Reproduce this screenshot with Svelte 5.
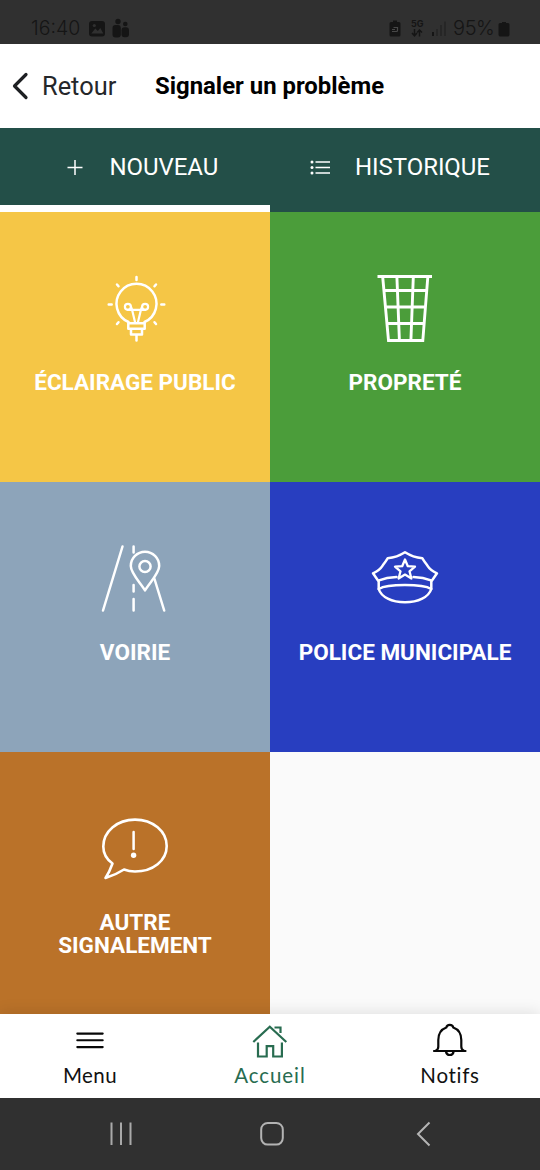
<script>
  const tiles = [
    { id: 'light', label: 'ÉCLAIRAGE PUBLIC', color: '#f5c646', box: '99 272 72 72' },
    { id: 'bin', label: 'PROPRETÉ', color: '#4b9d3a', box: '369 272 72 72' },
    { id: 'road', label: 'VOIRIE', color: '#8da4ba', box: '99 542 72 72' },
    { id: 'police', label: 'POLICE MUNICIPALE', color: '#283ec0', box: '369 542 72 72' },
    { id: 'other', label: 'AUTRE SIGNALEMENT', color: '#ba7229', box: '99 812 72 72' }
  ];
</script>

<div class="screen">
  <div class="status">
    <span class="time">16:40</span>
    <svg class="left-icons" width="36" height="22" viewBox="88 17 36 22">
      <rect x="89" y="21" width="16" height="15.500" rx="3" fill="#151515" />
      <path d="M91.300 33.500l4-5 2.500 2.500 2.500-3 3 5.500z" fill="#303030" />
      <circle cx="94.300" cy="25.500" r="1.600" fill="#303030" />
      <g fill="#151515">
        <circle cx="118" cy="21.500" r="2.700" /><circle cx="125.300" cy="24" r="2.300" />
        <rect x="112.500" y="25" width="8.300" height="12.500" rx="3" />
        <rect x="121.500" y="27.300" width="7.500" height="10" rx="3" />
      </g>
    </svg>
    <span class="space"></span>
    <svg class="battery-save" width="14" height="20" viewBox="389 19 14 20">
      <path d="M392 22h2v-1.500h4V22h2q1.500 0 1.500 1.500V35q0 1.500-1.500 1.500h-8q-1.500 0-1.500-1.500V23.500Q390.500 22 392 22z" fill="#151515" />
      <path d="M393 31.500h4.500q1 0 1-1v-3h-4m-1.500 2h3" fill="none" stroke="#484848" stroke-width="1.200" />
    </svg>
    <span class="network">
      <span>5G</span>
      <svg width="12" height="8" viewBox="0 0 12 8"><path d="M3.500 0v6M1 4l2.500 2.800L6 4M8.500 7.500V1M6.200 3.500L8.500 1 11 3.500" fill="none" stroke="#151515" stroke-width="1.500" /></svg>
    </span>
    <svg class="signal" width="15" height="17" viewBox="432 20 15 17">
      <path d="M434 32v4" stroke="#151515" stroke-width="2" />
      <path d="M438 29v7M442 25v11M446 21.500v14.500" stroke="#222" stroke-width="1.300" />
    </svg>
    <span class="percent">95%</span>
    <svg class="battery" width="12" height="17" viewBox="0 0 12 17"><path d="M2 2h2V1h4v1h2q1.500 0 1.500 1.500v10Q11.500 15.500 10 15.500H2Q.5 15.500.5 13.500v-10Q.5 2 2 2z" fill="#151515" /></svg>
  </div>

  <header>
    <svg width="18" height="30" viewBox="11 71 18 30"><path d="M26 74.500L14.500 86 26 97.500" fill="none" stroke="#1e2023" stroke-width="3.200" stroke-linecap="round" stroke-linejoin="round" /></svg>
    <span class="back">Retour</span>
    <h1>Signaler un problème</h1>
  </header>

  <nav class="tabs">
    <div class="tab active">
      <svg width="16" height="16" viewBox="67 160 16 16"><path d="M67.500 167.500h15M75 160v15" stroke="#fff" stroke-width="1.500" /></svg>
      <span>NOUVEAU</span>
    </div>
    <div class="tab history">
      <svg width="21" height="16" viewBox="310 160 21 16">
        <path d="M315.500 162h14.500M315.500 167.500h14.500M315.500 173h14.500" stroke="#fff" stroke-width="1.500" />
        <g fill="#fff"><circle cx="312" cy="162" r="1.500" /><circle cx="312" cy="167.500" r="1.500" /><circle cx="312" cy="173" r="1.500" /></g>
      </svg>
      <span>HISTORIQUE</span>
    </div>
  </nav>

  <main>
    {#each tiles as tile}
      <div class="tile" style:background={tile.color}>
        <svg width="72" height="72" viewBox={tile.box} fill="none" stroke="#fff" stroke-width="2.500" stroke-linecap="round" stroke-linejoin="round">
          {#if tile.id === 'light'}
            <path d="M128.500 322A20 20 0 1 1 144.500 322M136.500 277v3M108.700 304.500h3M161.300 304.500h3M117 284.500l1.500 1.800M156 284.500l-1.500 1.800M117 324l1.500-1.800M156 324l-1.500-1.800" />
            <path d="M128.300 323.300h16.400v5.500h-16.400zM131 328.800h11v5.700h-11zM136.500 335.500v5" />
            <g stroke-width="2.200"><path d="M135 322l-3-12.500M138 322l3-12.500M127.700 309.800h17.600M131 307l1 2.500M142 307l-1 2.500" /><circle cx="127.900" cy="306.800" r="3" /><circle cx="145.100" cy="306.800" r="3" /></g>
          {:else if tile.id === 'bin'}
            <path stroke-width="2.900" stroke-linecap="butt" stroke-linejoin="miter" d="M377.500 276.500h54.500M382.700 277l5.800 63.500h34.300l5-63.500M396.900 277l2.500 63.500M413.300 277l-2.400 63.500M384 290.500h42.500M385.300 307h40M387 323.500h37.500" />
          {:else if tile.id === 'road'}
            <path d="M122.500 546.500L103 610.500M133.600 546.500v6M133.600 585v6.500M133.600 599v11.500M154.500 579l9.700 31.500" />
            <path d="M145 590.500C141 583.500 130.800 573.500 130.800 566a14.200 14.200 0 0 1 28.400 0c0 7.500-10.200 17.500-14.200 24.500z" />
            <circle cx="145" cy="566.500" r="5.600" />
          {:else if tile.id === 'police'}
            <path d="M378.700 581.500L373 573.300q6.500-2.800 9.800-8 3-4 4.800-7 9.500-1 17.400-6 7.900 5 17.400 6 1.800 3 4.800 7 3.300 5.200 9.800 8l-5.700 8.200v7.500c-2.500 8-13 13.300-26.300 13.300s-23.800-5.300-26.300-13.300z" />
            <path d="M378.700 589c9-5.200 43.500-5.200 52.600 0M379 580.300q7.500-2.800 17.500-3.300M431 580.300q-7.500-2.800-17.500-3.300" />
            <path stroke-width="2.300" d="M405 559.500l2.800 6.700 7.200.5-5.500 4.600 1.900 7.200-6.400-3.900-6.400 3.900 1.900-7.200-5.500-4.600 7.200-.5z" />
          {:else}
            <path stroke-width="2.600" d="M112.500 863.500C105.500 858.500 103.300 852.500 103.300 846.500 103.300 831.500 117 819.600 135 819.600s31.700 11.900 31.700 26.400-13.700 25.500-31.700 25.500q-6 0-11-2-8.500 5.500-18.500 8.500 4-6 7-14.500z" />
            <path d="M133.600 832v17" /><circle cx="133.600" cy="855.300" r="2.700" fill="#fff" stroke="none" />
          {/if}
        </svg>
        <div class="label">{tile.label}</div>
      </div>
    {/each}
  </main>

  <nav class="bottom">
    <div class="item menu">
      <svg width="36" height="38" viewBox="72 1021 36 38"><path d="M77.300 1033.600h25.400M77.300 1040.300h25.400M77.300 1047.100h25.400" stroke="#080808" stroke-width="2.100" stroke-linecap="round" /></svg>
      <span>Menu</span>
    </div>
    <div class="item home">
      <svg width="36" height="38" viewBox="252 1021 36 38"><path d="M253.300 1042l16.500-15.300 16.500 15.300M274.500 1027.500h6v5.500M258 1042.500v14h8.700v-10.400h6.500v10.400h8.700v-14" fill="none" stroke="#286c50" stroke-width="2.200" /></svg>
      <span>Accueil</span>
    </div>
    <div class="item notifs">
      <svg width="36" height="38" viewBox="432 1021 36 38"><path d="M434 1051h31.500M436 1050.500q2.300-1 2.300-4v-6.500c0-6.500 2.500-10.500 8-12.500q.5-2.700 3.500-2.700t3.500 2.700c5.500 2 8 6 8 12.500v6.500q0 3 2.300 4M446 1051.500q.5 3.500 3.800 3.500t3.800-3.500" fill="none" stroke="#080808" stroke-width="2.200" stroke-linecap="round" /></svg>
      <span>Notifs</span>
    </div>
  </nav>

  <div class="system">
    <svg width="24" height="26" viewBox="109 1121 24 26"><path d="M111.500 1122.500v22.500M121 1122.500v22.500M130.500 1122.500v22.500" stroke="#a9a9a9" stroke-width="2" /></svg>
    <svg class="home-key" width="26" height="26" viewBox="259 1121 26 26"><rect x="261.200" y="1123" width="21.600" height="21.600" rx="6.500" fill="none" stroke="#b3b3b3" stroke-width="2" /></svg>
    <svg width="18" height="26" viewBox="415 1121 18 26"><path d="M429.500 1122.500L418 1134l11.500 11.500" fill="none" stroke="#b5b5b5" stroke-width="2" /></svg>
  </div>
</div>

<style>
  :global(body) { margin: 0; }
  .screen { width: 540px; height: 1170px; display: flex; flex-direction: column; overflow: hidden; background: #fafafa; font-family: Roboto, sans-serif; }
  svg { display: block; flex: none; }
  .status { height: 44px; flex: none; box-sizing: border-box; background: #303030; display: flex; padding: 17px 30px 0 31px; color: #151515; font: 300 20px/22px Inter, sans-serif; }
  .time { width: 50px; margin-right: 7px; font-size: 19.500px; }
  .left-icons { overflow: visible; }
  .space { flex: 1; }
  .battery-save { margin: 2px 9px 0 0; }
  .network { width: 13px; display: flex; flex-direction: column; font: 700 9px/10px Inter, sans-serif; padding-top: 2px; margin-right: 7px; }
  .signal { margin: 3px 7px 0 0; }
  .percent { width: 45px; letter-spacing: -0.400px; }
  .battery { margin-top: 4px; }
  header { height: 84px; flex: none; background: #fff; display: flex; align-items: center; padding-left: 11px; }
  .back { width: 99px; margin-left: 13px; padding-right: 1px; font-size: 25.400px; color: #25272a; }
  h1 { margin: 0 0 0 13px; font-size: 23.900px; font-weight: 700; color: #000; white-space: nowrap; }
  .tabs { height: 84px; flex: none; display: flex; background: #234f48; color: #fff; font-size: 24px; }
  .tab { width: 270px; box-sizing: border-box; display: flex; align-items: flex-start; padding: 32px 0 0 67px; }
  .tab span { line-height: 28px; margin: -7px 0 0 26.500px; letter-spacing: -0.050px; }
  .active { border-bottom: 7px solid #fff; }
  .history { padding-left: 40px; }
  .history span { margin-left: 24px; }
  main { height: 802px; flex: none; overflow: hidden; display: grid; grid-template-columns: 270px 270px; grid-auto-rows: 270px; }
  .tile { display: flex; flex-direction: column; align-items: center; padding-top: 60px; box-sizing: border-box; min-height: 0; }
  .label { width: 226px; margin-top: 27px; color: #fff; text-align: center; font-size: 22.500px; line-height: 22.500px; font-weight: 700; }
  .tile:nth-child(5) .label { width: 170px; }
  .bottom { height: 84px; flex: none; position: relative; background: #fff; display: grid; grid-template-columns: repeat(3, 1fr); box-shadow: 0 -2px 14px rgba(0, 0, 0, 0.100); }
  .item { display: flex; flex-direction: column; align-items: center; padding-top: 7px; color: #111; font: 400 20.500px/24px Lato, sans-serif; letter-spacing: 0.900px; }
  .item span { margin-top: 4px; }
  .menu { letter-spacing: 0.450px; }
  .notifs { letter-spacing: 0.700px; }
  .home { color: #286c50; }
  .system { height: 72px; flex: none; position: relative; box-sizing: border-box; background: #303030; display: flex; justify-content: space-between; padding: 23px 107px 0 109px; }
  .home-key { margin-right: 4px; }
</style>
